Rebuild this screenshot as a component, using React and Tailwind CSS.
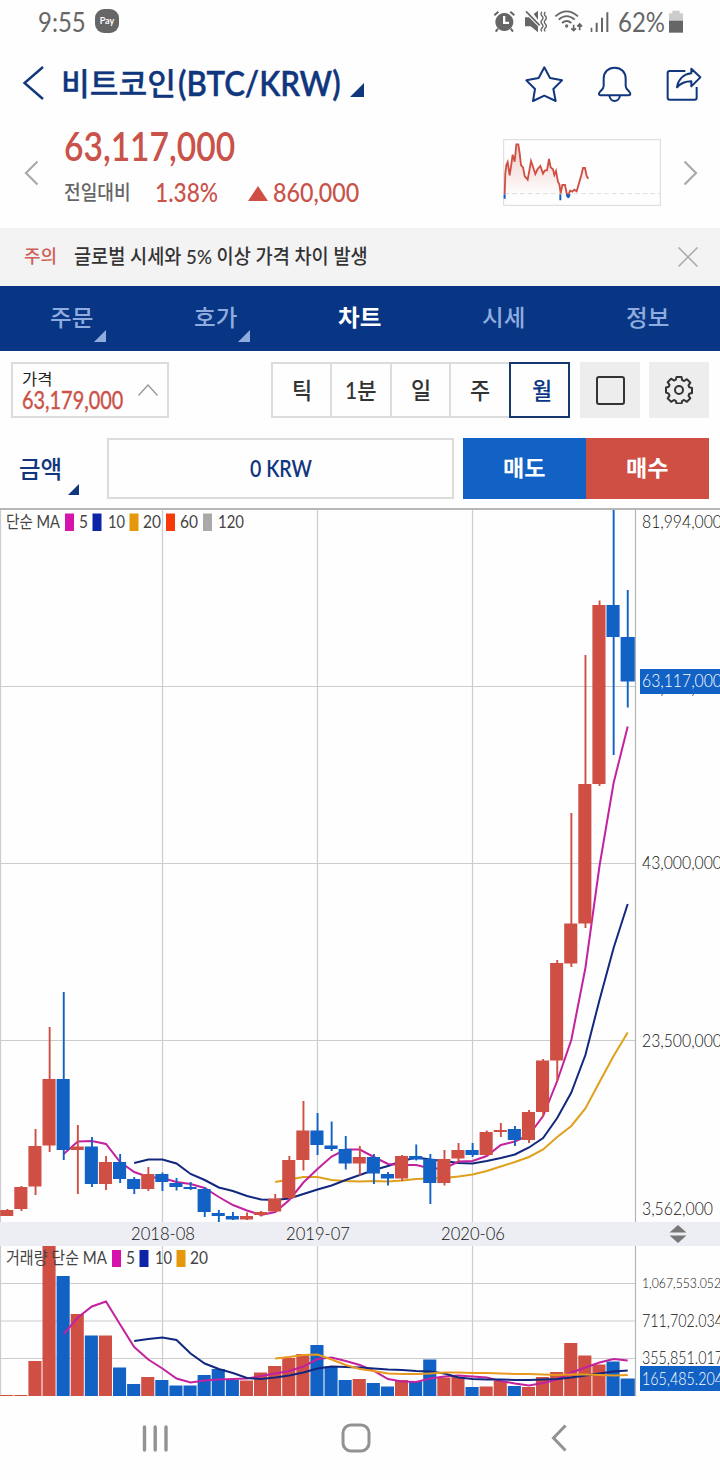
import React, { useLayoutEffect, useRef, useState } from "react";

const RED = "#cf4f45";
const BLUE = "#1261c4";

// x centre of the candle at index i
const cx = (i) => 7.3 + i * 14.1;

// [up, high, open/close top, open/close bottom, low]
const candles = [
  [1, 1209, 1210, 1216, 1216], [1, 1186, 1187, 1209, 1211], [1, 1129, 1146, 1186.5, 1195],
  [1, 1027, 1079, 1145.5, 1152], [0, 992, 1079, 1150, 1160], [1, 1125, 1146.5, 1150, 1194],
  [0, 1137, 1146.5, 1184, 1187], [1, 1156, 1162, 1184, 1190], [0, 1154, 1162, 1179, 1183],
  [0, 1177, 1179, 1189, 1194], [1, 1167, 1174, 1189, 1191], [0, 1172.5, 1174, 1182, 1191],
  [0, 1178, 1183, 1187, 1190.5], [0, 1182, 1187, 1189, 1190], [0, 1187, 1189, 1212, 1217],
  [0, 1210, 1213, 1216, 1222], [0, 1212, 1216, 1219.5, 1220], [1, 1212.5, 1216, 1219.5, 1220],
  [1, 1211, 1212, 1215, 1216.5], [1, 1194, 1198.5, 1211.5, 1212], [1, 1156, 1160, 1198, 1199],
  [1, 1101, 1130.5, 1160, 1170.5], [0, 1113, 1130.5, 1145, 1155], [0, 1121.5, 1145.5, 1149, 1151],
  [0, 1136, 1149, 1163.5, 1169.5], [1, 1146, 1157, 1163.5, 1175.5], [0, 1154, 1157, 1173.5, 1184],
  [0, 1172, 1174, 1178.5, 1185.5], [1, 1155, 1156, 1178.5, 1181], [0, 1144.5, 1156, 1159.5, 1160.5],
  [0, 1154, 1159, 1183, 1204], [1, 1150, 1159, 1183, 1185.5], [1, 1143, 1150, 1158.5, 1161.5],
  [0, 1143, 1150, 1155, 1157], [1, 1130.5, 1132, 1155, 1155.5], [1, 1123, 1130, 1132, 1137],
  [0, 1126, 1129, 1140, 1146], [1, 1110, 1112, 1140, 1143], [1, 1059, 1060.5, 1112, 1117],
  [1, 960, 963, 1060.5, 1081], [1, 813, 923.5, 963.5, 967], [1, 655, 784, 923.5, 928],
  [1, 600.5, 605, 784, 786], [0, 508, 605, 637, 755], [0, 590, 637, 681.5, 707.5],
];

const ma5 = [1154, 1141.5, 1141, 1144, 1162, 1172, 1177, 1178, 1182, 1184, 1188, 1197, 1205, 1210.5, 1215, 1212, 1200, 1182.5, 1169, 1156.5, 1149.5, 1149.5, 1157, 1164, 1165, 1165, 1168.5, 1168.5, 1161.5, 1161, 1156, 1145, 1141.5, 1135, 1116, 1081, 1040, 968, 866, 783, 726.5];
const ma10 = [1163, 1159.5, 1159.5, 1163.5, 1174, 1180, 1187.5, 1191, 1196, 1199.5, 1200, 1198.5, 1194, 1189.5, 1185.5, 1180, 1175, 1170, 1166, 1161, 1157.5, 1159.5, 1161, 1163, 1163.5, 1161, 1158, 1154.5, 1147.5, 1138, 1118, 1092.5, 1055, 1000, 948, 904];
const ma20 = [1182, 1179.5, 1177, 1177, 1180, 1181, 1181.5, 1181, 1181.5, 1180.5, 1179, 1178.5, 1178, 1176.5, 1174.5, 1171, 1166.5, 1162, 1157, 1149.5, 1137, 1126, 1108.5, 1082, 1056, 1032.5];

const volumes = [1395, 1395, 1361, 1246, 1276, 1314, 1335.5, 1335.5, 1367.5, 1384, 1377, 1380, 1385.5, 1385.5, 1375, 1369, 1380, 1380.5, 1372.5, 1366, 1358, 1354, 1345, 1366.5, 1380, 1379, 1383, 1386.5, 1380, 1381.5, 1359.5, 1377.5, 1377, 1387, 1386.5, 1381, 1386, 1387, 1377, 1372, 1343, 1355.5, 1364.5, 1361.5, 1378.5];
const vma5 = [1334, 1317.5, 1306.5, 1301.5, 1324.5, 1347, 1359.5, 1368.5, 1378.5, 1382.5, 1380.5, 1379.5, 1379, 1378.5, 1376, 1373.5, 1371, 1366.5, 1359, 1357.5, 1361, 1365, 1371, 1379, 1381.5, 1382, 1378.5, 1376.5, 1375.5, 1376.5, 1377.5, 1381, 1383.5, 1385.5, 1383, 1379.5, 1372.5, 1367.5, 1362.5, 1359, 1360.5];
const vma10 = [1341, 1339, 1337.5, 1340, 1353.5, 1363.5, 1369, 1373, 1378, 1379, 1377.5, 1375.5, 1372.5, 1368.5, 1366.5, 1367, 1367.5, 1368.5, 1369.5, 1370, 1371, 1371.5, 1373.5, 1377.5, 1379, 1379.5, 1379.5, 1380, 1380, 1379.5, 1379, 1377.5, 1375.5, 1373.5, 1371.5, 1370.5];
const vma20 = [1358.5, 1357, 1355, 1354.5, 1359.5, 1365, 1369, 1371, 1373.5, 1374, 1374, 1373.5, 1372.5, 1372.5, 1373, 1373, 1373.5, 1374, 1374, 1374.5, 1375, 1374.5, 1374.5, 1375, 1375.5, 1375];

const tabs = [
  { label: "주문", menu: true },
  { label: "호가", menu: true },
  { label: "차트", active: true },
  { label: "시세" },
  { label: "정보" },
];

// Squeezes a single line of text to the width given in className
function Fit({ className = "", children }) {
  const box = useRef(null);
  const text = useRef(null);
  const [scale, setScale] = useState(1);

  useLayoutEffect(() => {
    setScale(box.current.offsetWidth / text.current.offsetWidth);
  }, [children]);

  return (
    <span ref={box} className={`block shrink-0 whitespace-nowrap ${className}`}>
      <span
        ref={text}
        className="inline-block origin-left"
        style={{ transform: `scaleX(${scale})` }}
      >
        {children}
      </span>
    </span>
  );
}

function Corner({ className }) {
  return (
    <svg viewBox="0 0 12 12" className={className} fill="currentColor">
      <path d="M12 0v12H0z" />
    </svg>
  );
}

function StatusBar() {
  return (
    <div className="flex h-11 items-center pl-[38px] pr-[37px] text-[#666]">
      <Fit className="w-12 text-[26px] leading-none">9:55</Fit>
      <div className="-mt-0.5 ml-[9px] flex h-6 w-6 items-center justify-center rounded-[9px] bg-[#666] text-[9px] font-bold leading-none text-white">
        <span className="-mt-px">Pay</span>
      </div>
      <svg viewBox="279 28 69 72" className="ml-auto h-6 w-[23px]">
        <g fill="none" stroke="currentColor">
          <path d="M283 44l12-11M343 44l-12-11" strokeWidth="6" />
          <path d="M294 84l-7 9M332 84l7 9" strokeWidth="6" />
        </g>
        <path
          fillRule="evenodd"
          fill="currentColor"
          d="M313 37a27 27 0 1 0 .1 0zM309 46h7v17h11v7h-18z"
        />
      </svg>
      <svg viewBox="370 28 69 72" className="ml-2 h-6 w-[23px]" fill="currentColor">
        <path d="M373 50h12l27 27v18l-22-18h-17z" />
        <path d="M399 40l13-10v27z" />
        <path d="M376 32l41 42" stroke="currentColor" strokeWidth="5" />
        <path
          d="M424 34q-6 6 0 12t0 12 0 12 0 12 0 10M434 34q-6 6 0 12t0 12 0 12 0 12 0 10"
          fill="none"
          stroke="currentColor"
          strokeWidth="4"
        />
      </svg>
      <svg viewBox="460 28 87 72" className="ml-[7px] h-6 w-[29px]" fill="none" stroke="currentColor" strokeWidth="5.500">
        <path d="M464 47q34-30 68 0M474 57q24-21 48 0M484 67q14-12 28 0" />
        <circle cx="498" cy="76" r="3" strokeWidth="4" />
        <path d="M519 72v17M512 83l7 7 7-7M537 89V71M530 77l7-7 7 7" strokeWidth="5" />
      </svg>
      <svg viewBox="568 28 60 72" className="ml-[7px] h-6 w-5" fill="currentColor">
        <path d="M570 81h5v13h-5zM585 66h6v28h-6zM601 51h6v43h-6zM617 35h6v59h-6z" />
      </svg>
      <Fit className="ml-2 w-[47px] text-[26px] leading-none">62%</Fit>
      <svg viewBox="807 28 42 72" className="ml-1 h-6 w-3.5">
        <path d="M817 30h22v8h10v22h-42V38h10z" fill="#ccc" />
        <path d="M807 60h42v36h-42z" fill="currentColor" />
      </svg>
    </div>
  );
}

function Header() {
  return (
    <header className="flex h-20 items-center pl-[22px] pr-[17px] text-[#10367d]">
      <svg viewBox="0 0 24 36" className="-mt-0.5 h-9 w-6" fill="none" stroke="currentColor" strokeWidth="2.4">
        <path d="M21 2L2.500 18L21 34" />
      </svg>
      <Fit className="-mt-0.5 ml-[15px] w-[115px] text-[31px] font-medium leading-none [-webkit-text-stroke:0.3px]">비트코인</Fit>
      <Fit className="-mt-[3px] ml-0.5 w-[163px] text-[35px] font-semibold leading-none [-webkit-text-stroke:0.4px]">(BTC/KRW)</Fit>
      <Corner className="ml-[9px] mt-3 h-3.5 w-3.5" />
      <div className="ml-auto flex items-center">
        <svg viewBox="376 196 117 111" className="h-[37px] w-[39px]" fill="none" stroke="currentColor" strokeWidth="6" strokeLinejoin="round">
          <path d="M434 200l17 32 36 7-26 26 7 36-34-16-34 16 6-36-26-26 37-7z" />
        </svg>
        <svg viewBox="591 195 105 111" className="ml-[33px] h-[37px] w-[35px]" fill="none" stroke="currentColor" strokeWidth="6" strokeLinejoin="round">
          <path d="M644 200c-20 0-33 14-33 33v22c0 8-4 11-10 16-6 6-5 12 1 12h84c6 0 7-6 1-12-6-5-10-8-10-16v-22c0-19-13-33-33-33z" />
          <path d="M628 284c2 10 8 16 16 16s14-6 16-16" />
        </svg>
        <svg viewBox="801 198 108 105" className="ml-[34px] mr-px h-[35px] w-9" fill="none" stroke="currentColor" strokeWidth="6" strokeLinejoin="round">
          <path d="M859 210h-47q-6 0-6 6v74q0 6 6 6h75q6 0 6-6v-32" />
          <path d="M877 203l27 26-27 27v-15c-19 0-32 6-43 18 3-22 18-39 43-42z" />
        </svg>
      </div>
    </header>
  );
}

function Sparkline() {
  const line =
    "M314 582L316 520L319 495L323 486L329 526L333 500L338 464L344 485L349 433H355L359 460L363 495L369 502L374 528L383 539L388 512L393 483L399 500L406 522L413 507L421 498L429 521L435 511L441 511L447 477L452 502L459 508L463 525L468 513L474 546L478 552L482 580L487 555H495L500 580L504 588L510 572L517 575L523 569L530 574L537 550L544 525L549 504L555 504L560 528L565 536";
  return (
    <svg viewBox="309 417 474 201" className="h-[67px] w-[158px]" fill="none">
      <defs>
        <linearGradient id="fade" x1="0" y1="0" x2="0" y2="1">
          <stop offset="0" stopColor={RED} stopOpacity="0.28" />
          <stop offset="1" stopColor={RED} stopOpacity="0" />
        </linearGradient>
      </defs>
      <rect x="311" y="419" width="470" height="197" stroke="#d9d9d9" strokeWidth="3" />
      <path d={`${line}L545 540L530 582H314z`} fill="url(#fade)" />
      <path d="M314 581H780" stroke="#dcdcdc" strokeWidth="3" strokeDasharray="14 9" />
      <path d={line} stroke={RED} strokeWidth="5.500" />
      <path d="M314 583V596M481 583V601M500 583Q505 600 509 583" stroke={BLUE} strokeWidth="6" />
    </svg>
  );
}

function PriceSummary() {
  return (
    <section className="flex h-[104px] pl-6 pr-[22px] text-[#c9524a]">
      <svg viewBox="0 0 14 26" className="mt-9 h-[26px] w-3.5 text-[#aaa]" fill="none" stroke="currentColor" strokeWidth="2.2">
        <path d="M13.500 1.500L2 13L13.500 24.500" />
      </svg>
      <div className="ml-[26px] mt-px">
        <Fit className="h-[45px] w-[171px] text-[41px] font-semibold leading-[42px]">63,117,000</Fit>
        <div className="flex h-11 items-center">
          <Fit className="w-[67px] text-[20px] font-medium leading-none text-[#666]">전일대비</Fit>
          <Fit className="-mt-0.5 ml-6 w-[63px] text-[27px] font-medium leading-none">1.38%</Fit>
          <svg viewBox="0 0 20 16" className="ml-[30px] mt-0.5 h-[15px] w-5" fill={RED} preserveAspectRatio="none">
            <path d="M10 0l10 16H0z" />
          </svg>
          <Fit className="-mt-0.5 ml-[5px] w-[86px] text-[27px] font-medium leading-none">860,000</Fit>
        </div>
      </div>
      <div className="ml-auto mt-[15px]">
        <Sparkline />
      </div>
      <svg viewBox="0 0 14 26" className="ml-[23px] mt-9 h-[26px] w-3.5 text-[#aaa]" fill="none" stroke="currentColor" strokeWidth="2.2">
        <path d="M.5 1.500L12 13L.5 24.500" />
      </svg>
    </section>
  );
}

function Notice() {
  return (
    <div className="flex h-[58px] items-center bg-[#f3f3f3] pl-6 pr-[22px]">
      <Fit className="-mt-0.5 w-[33px] text-[18px] font-medium leading-none text-[#cf5f58]">주의</Fit>
      <Fit className="-mt-0.5 ml-[17px] w-[294px] text-[20px] font-medium leading-none text-[#333]">
        글로벌 시세와 5% 이상 가격 차이 발생
      </Fit>
      <svg viewBox="0 0 20 20" className="ml-auto h-5 w-5" stroke="#aaa" strokeWidth="1.500">
        <path d="M.5.5l19 19M19.500.5l-19 19" />
      </svg>
    </div>
  );
}

function Tabs() {
  return (
    <nav className="grid h-[65px] grid-cols-5 bg-[#083684]">
      {tabs.map((tab) => (
        <div
          key={tab.label}
          className={`relative flex items-center justify-center pb-[3px] pr-0.5 ${
            tab.active ? "font-bold text-white" : "font-medium text-[#8facdf]"
          }`}
        >
          <Fit className="w-[43px] text-[23px] leading-none">{tab.label}</Fit>
          {tab.menu && <Corner className="absolute bottom-[9px] right-[38px] h-3 w-3" />}
        </div>
      ))}
    </nav>
  );
}

function Toolbar() {
  const periods = [
    ["틱", "w-[59px]"],
    ["1분", "w-[60px]"],
    ["일", "w-[59px]"],
    ["주", "w-[60px]"],
  ];
  return (
    <div className="flex h-[67px] pl-[11px] pr-[11px] pt-[11px]">
      <div className="flex h-14 w-[158px] border-2 border-[#dcdcdc] pl-[9px] pt-1.5">
        <div>
          <Fit className="h-[18px] w-[30px] text-[16px] leading-[18px] text-[#222]">가격</Fit>
          <Fit className="w-[101px] text-[25px] leading-[22px] text-[#c9524a] [-webkit-text-stroke:0.4px]">63,179,000</Fit>
        </div>
        <svg viewBox="0 0 20 12" className="ml-[15px] mt-3.5 h-3 w-5" fill="none" stroke="#999" strokeWidth="1.400">
          <path d="M.5 11.500L10 1l9.500 10.500" />
        </svg>
      </div>
      <div className="ml-auto flex h-14 text-[23px] font-medium leading-none text-[#333]">
        {periods.map(([label, width]) => (
          <div
            key={label}
            className={`flex items-center justify-center border-y-2 border-l-2 border-[#dcdcdc] ${width}`}
          >
            <Fit className={label.length > 1 ? "w-[32px]" : "w-5"}>{label}</Fit>
          </div>
        ))}
        <div className="flex w-[61px] items-center justify-center border-2 border-[#17386f] text-[#083684]">
          <Fit className="ml-1 w-5">월</Fit>
        </div>
      </div>
      <div className="ml-2.5 flex h-14 w-[60px] items-center justify-center bg-[#ededed]">
        <div className="h-[29px] w-[29px] rounded-[3px] border-2 border-[#333]" />
      </div>
      <div className="ml-[9px] flex h-14 w-[60px] items-center justify-center bg-[#ededed]">
        <svg viewBox="0 0 28 28" className="h-7 w-7" fill="none" stroke="#333" strokeWidth="2">
          <path
            strokeLinejoin="round"
            d="M11.500 1h5l.7 3.200 1.900.8 2.800-1.800 3.400 3.400-1.800 2.800.8 1.900 2.700.7v5l-2.700.7-.8 1.900 1.800 2.800-3.400 3.400-2.800-1.800-1.900.8-.7 2.700h-5l-.7-2.700-1.900-.8-2.800 1.800-3.400-3.400 1.800-2.800-.8-1.900L1 16.500v-5l2.700-.7.8-1.900-1.800-2.800 3.400-3.400 2.800 1.800 1.900-.8z"
          />
          <circle cx="14" cy="14" r="4" />
        </svg>
      </div>
    </div>
  );
}

function OrderRow() {
  return (
    <div className="flex h-[90px] px-[11px] pt-5">
      <div className="relative flex h-[61px] w-24 items-center pl-2 text-[#10367d]">
        <Fit className="w-[43px] text-[24px] font-medium leading-none">금액</Fit>
        <Corner className="absolute bottom-1 left-[57px] h-[11px] w-[11px]" />
      </div>
      <div className="flex h-[61px] w-[347px] items-center justify-center border-2 border-[#dcdcdc] text-[#10367d]">
        <Fit className="w-[62px] text-[23px] font-semibold leading-none">0 KRW</Fit>
      </div>
      <div className="ml-[9px] flex h-[61px] w-[123px] items-center justify-center bg-[#1261c4] pb-0.5 pr-0.5 text-white">
        <Fit className="w-[42px] text-[22px] font-bold leading-none">매도</Fit>
      </div>
      <div className="flex h-[61px] w-[123px] items-center justify-center bg-[#cf4f45] pb-0.5 pr-0.5 text-white">
        <Fit className="w-[42px] text-[22px] font-bold leading-none">매수</Fit>
      </div>
    </div>
  );
}

function Line({ values, color }) {
  const first = 45 - values.length;
  return (
    <polyline
      points={values.map((y, i) => `${cx(first + i)},${y}`).join(" ")}
      fill="none"
      stroke={color}
      strokeWidth="2"
    />
  );
}

function Label({ x, y, w, size = 17, fill = "#444", children }) {
  return (
    <text x={x} y={y} fontSize={size} fill={fill} textLength={w} lengthAdjust="spacingAndGlyphs">
      {children}
    </text>
  );
}

function Grid({ rows, top, bottom }) {
  return (
    <g stroke="#ccc" strokeWidth="1.200">
      {rows.map((y) => (
        <path key={y} d={`M0 ${y}H635`} />
      ))}
      {[0.5, 162.5, 317.5, 472.5].map((x) => (
        <path key={x} d={`M${x} ${top}V${bottom}`} />
      ))}
      <path d={`M635.500 ${top}V${bottom}`} stroke="#b4b4b4" />
    </g>
  );
}

function PriceChart() {
  return (
    <svg viewBox="0 508 720 714" className="block h-[714px] w-[720px]">
      <Grid rows={[686.5, 863.5, 1040.5]} top={508} bottom={1222} />
      <Line values={ma20} color="#dfa01c" />
      <Line values={ma10} color="#12287f" />
      <Line values={ma5} color="#c3229f" />
      {candles.map(([up, high, top, bottom, low], i) => (
        <g key={i} fill={up ? RED : BLUE}>
          <rect x={cx(i) - 0.9} y={high} width="1.900" height={low - high} />
          <rect x={cx(i) - 7.1} y={top} width={i === 44 ? 14.2 : 13.1} height={bottom - top} />
        </g>
      ))}
      <path d="M0 509H720" stroke="#b5b8b5" strokeWidth="2" />

      <Label x={6} y={528} w={54}>단순 MA</Label>
      <rect x="65" y="513.500" width="9" height="17.500" fill="#d614ad" />
      <Label x={79} y={528} w={9}>5</Label>
      <rect x="92.500" y="513.500" width="9" height="17.500" fill="#0c24a6" />
      <Label x={108} y={528} w={17}>10</Label>
      <rect x="129.500" y="513.500" width="9" height="17.500" fill="#e6980c" />
      <Label x={143} y={528} w={18}>20</Label>
      <rect x="166" y="513.500" width="9" height="17.500" fill="#f63a0a" />
      <Label x={180} y={528} w={18}>60</Label>
      <rect x="203" y="513.500" width="9" height="17.500" fill="#a9a9a9" />
      <Label x={218} y={528} w={26}>120</Label>

      <g fontWeight="300">
        <Label x={642} y={528} w={80} fill="#111">81,994,000</Label>
        <Label x={642} y={869} w={80} fill="#111">43,000,000</Label>
        <Label x={642} y={1046.5} w={80} fill="#111">23,500,000</Label>
        <Label x={642} y={1215} w={71} fill="#111">3,562,000</Label>
        <rect x="640" y="669" width="80" height="25" fill={BLUE} />
        <Label x={642} y={687} w={80} fill="#fff">63,117,000</Label>
      </g>
      <path d="M662.500 694l-1 1.800M693.500 694l-1 1.800" stroke="#555" />
    </svg>
  );
}

function DateAxis() {
  return (
    <svg viewBox="0 1222 720 24" className="block h-6 w-[720px] bg-[#edeef3]" fontWeight="300">
      <Label x={131} y={1240} w={64} fill="#111">2018-08</Label>
      <Label x={286} y={1240} w={64} fill="#111">2019-07</Label>
      <Label x={441} y={1240} w={64} fill="#111">2020-06</Label>
      <path d="M669.500 1232.500h17l-8.500-7.500zM669.500 1235.500h17l-8.500 7.500z" fill="#777" />
    </svg>
  );
}

function VolumeChart() {
  return (
    <svg viewBox="0 1246 720 150" className="block h-[150px] w-[720px]">
      <Grid rows={[1283.5, 1321, 1358.5]} top={1246} bottom={1396} />
      {volumes.map((y, i) => (
        <rect
          key={i}
          x={cx(i) - 7.1}
          y={y}
          width={i === 44 ? 14.2 : 13.1}
          height={1396 - y}
          fill={candles[i][0] ? RED : BLUE}
        />
      ))}
      <Line values={vma5} color="#c3229f" />
      <Line values={vma10} color="#12287f" />
      <Line values={vma20} color="#e89a20" />

      <Label x={6} y={1264} w={101}>거래량 단순 MA</Label>
      <rect x="112" y="1250" width="9" height="17" fill="#d614ad" />
      <Label x={126} y={1264} w={9}>5</Label>
      <rect x="139.500" y="1250" width="9" height="17" fill="#0c24a6" />
      <Label x={155} y={1264} w={17}>10</Label>
      <rect x="176.500" y="1250" width="9" height="17" fill="#e6980c" />
      <Label x={190} y={1264} w={18}>20</Label>

      <g fontWeight="300">
        <Label x={642} y={1288} w={79} size={14} fill="#111">1,067,553.052</Label>
        <Label x={642} y={1327} w={81} fill="#111">711,702.034</Label>
        <Label x={642} y={1364} w={81} fill="#111">355,851.017</Label>
        <rect x="640" y="1366" width="80" height="25" fill={BLUE} />
        <Label x={642} y={1384.5} w={81} fill="#fff">165,485.204</Label>
      </g>
    </svg>
  );
}

function SystemNav() {
  return (
    <div className="flex h-[84px] items-center pl-[142px] text-[#929292]">
      <svg viewBox="0 0 26 28" className="h-7 w-[26px]" stroke="currentColor" strokeWidth="3.400" strokeLinecap="round">
        <path d="M2.500 3v23M13.200 3v23M24 3v23" />
      </svg>
      <svg viewBox="0 0 30 30" className="ml-[173px] h-[30px] w-[30px]" fill="none" stroke="currentColor" strokeWidth="3">
        <rect x="2" y="2" width="26" height="26" rx="8" />
      </svg>
      <svg viewBox="0 0 16 28" className="ml-[180px] h-7 w-4" fill="none" stroke="currentColor" strokeWidth="3">
        <path d="M14.500 1.500L2.500 14l12 12.500" />
      </svg>
    </div>
  );
}

function App() {
  return (
    <div className="h-[1480px] w-[720px] overflow-hidden bg-[#fefefe] font-['Lato','Noto_Sans_CJK_KR',sans-serif]">
      <StatusBar />
      <Header />
      <PriceSummary />
      <Notice />
      <Tabs />
      <Toolbar />
      <OrderRow />
      <PriceChart />
      <DateAxis />
      <VolumeChart />
      <SystemNav />
    </div>
  );
}

export default App;
